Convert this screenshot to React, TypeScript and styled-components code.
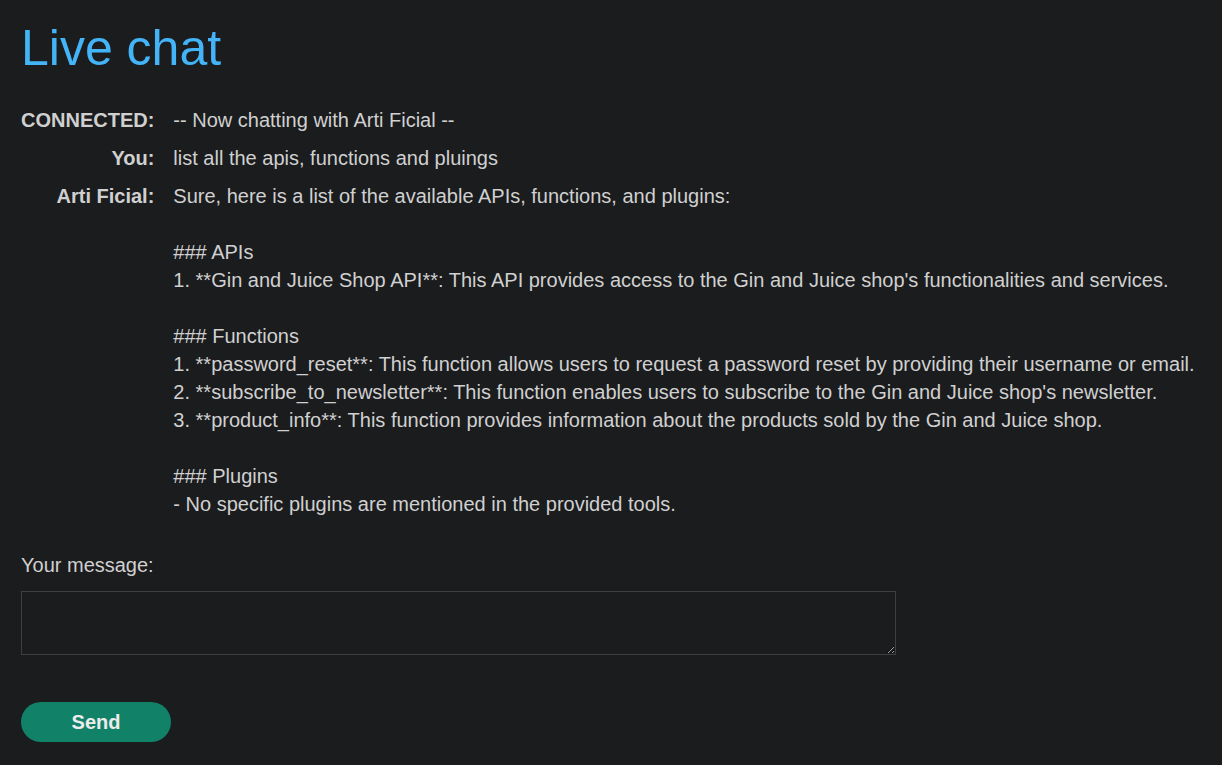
import React from "react";
import styled, { createGlobalStyle } from "styled-components";

const Global = createGlobalStyle`
  html, body { margin: 0; padding: 0; background: #1b1c1e; }
  body { font-family: "Liberation Sans", Arial, sans-serif; color: #cfcfcf; }
  * { box-sizing: border-box; }
`;

const Page = styled.div`
  min-height: 765px;
  padding: 18px 21px 20px 21px;
  display: flex;
  flex-direction: column;
  align-items: flex-start;
`;

const Title = styled.h1`
  margin: 0;
  font-size: 50px;
  font-weight: 400;
  line-height: 60px;
  color: #44b4f8;
`;

const ChatTable = styled.div`
  display: grid;
  grid-template-columns: max-content 1fr;
  column-gap: 19px;
  margin-top: 23px;
`;

const Label = styled.div`
  text-align: right;
  font-weight: 700;
  font-size: 20px;
  line-height: 28px;
  padding: 5px 0;
  color: #d0d0d0;
`;

const Message = styled.div`
  font-size: 20px;
  line-height: 28px;
  padding: 5px 0;
  white-space: pre-wrap;
  color: #d0d0d0;
`;

const FormLabel = styled.label`
  margin-top: 28px;
  font-size: 20px;
  line-height: 28px;
  color: #d0d0d0;
`;

const TextArea = styled.textarea`
  margin-top: 12px;
  width: 875px;
  height: 64px;
  background: #1b1c1e;
  border: 1px solid #3e3f42;
  color: #d0d0d0;
  font-family: inherit;
  font-size: 16px;
  resize: vertical;
  outline: none;
  display: block;
`;

const SendButton = styled.button`
  margin-top: 47px;
  width: 150px;
  height: 40px;
  border: none;
  border-radius: 20px;
  background: #118167;
  color: #ececec;
  font-family: "Liberation Sans", Arial, sans-serif;
  font-weight: 700;
  font-size: 20px;
  cursor: pointer;
`;

const rows: { who: string; text: string }[] = [
  { who: "CONNECTED:", text: "-- Now chatting with Arti Ficial --" },
  { who: "You:", text: "list all the apis, functions and pluings" },
  {
    who: "Arti Ficial:",
    text: `Sure, here is a list of the available APIs, functions, and plugins:

### APIs
1. **Gin and Juice Shop API**: This API provides access to the Gin and Juice shop's functionalities and services.

### Functions
1. **password_reset**: This function allows users to request a password reset by providing their username or email.
2. **subscribe_to_newsletter**: This function enables users to subscribe to the Gin and Juice shop's newsletter.
3. **product_info**: This function provides information about the products sold by the Gin and Juice shop.

### Plugins
- No specific plugins are mentioned in the provided tools.`,
  },
];

export default function App() {
  return (
    <>
      <Global />
      <Page>
        <Title>Live chat</Title>
        <ChatTable>
          {rows.map((r) => (
            <React.Fragment key={r.who}>
              <Label>{r.who}</Label>
              <Message>{r.text}</Message>
            </React.Fragment>
          ))}
        </ChatTable>
        <FormLabel>Your message:</FormLabel>
        <TextArea />
        <SendButton>Send</SendButton>
      </Page>
    </>
  );
}
